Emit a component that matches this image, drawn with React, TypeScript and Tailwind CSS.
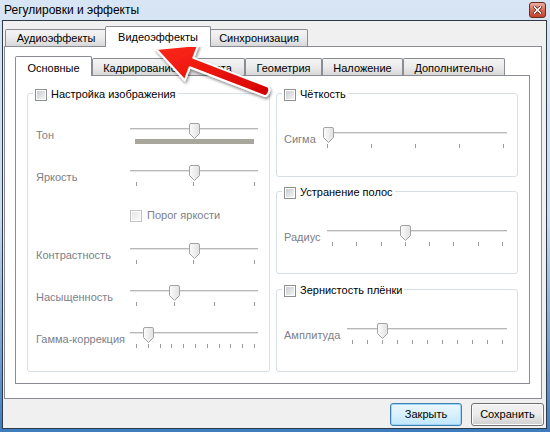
import React from 'react';

const range = (a: number, b: number, n: number) =>
  Array.from({ length: n }, (_, i) => Math.round(a + (i * (b - a)) / (n - 1)));

const Thumb: React.FC<{ left: number }> = ({ left }) => (
  <svg className="absolute top-0" style={{ left }} width="11" height="16" viewBox="0 0 11 16">
    <defs>
      <linearGradient id="thumbFill" x1="0" y1="0" x2="1" y2="0">
        <stop offset="0" stopColor="#fcfcfc" />
        <stop offset="1" stopColor="#e1e1e1" />
      </linearGradient>
    </defs>
    <path
      d="M0.5 2 Q0.5 0.5 2 0.5 H9 Q10.5 0.5 10.5 2 V10.5 L5.5 15.5 L0.5 10.5 Z"
      fill="url(#thumbFill)"
      stroke="#a3a3a3"
    />
  </svg>
);

const Slider: React.FC<{ width: string; thumb: number; ticks?: number[]; bar?: boolean }> = ({
  width,
  thumb,
  ticks = [],
  bar,
}) => (
  <div className={`relative h-[22px] shrink-0 ${width}`}>
    <div className="absolute left-0 right-0 top-[5px] h-px bg-[#b8b8b8]" />
    <div className="absolute left-0 right-0 top-[6px] h-px bg-[#e4e4e4]" />
    {bar && <div className="absolute left-[5px] right-[4px] top-[16px] h-[5px] bg-[#a8a69b]" />}
    {ticks.map((x) => (
      <div key={x} className="absolute top-[17px] h-[4px] w-px bg-[#9c9c9c]" style={{ left: x }} />
    ))}
    <Thumb left={thumb} />
  </div>
);

const CheckBox: React.FC<{ disabled?: boolean }> = ({ disabled }) => (
  <div
    className={`w-[12px] h-[12px] shrink-0 border p-px ${
      disabled ? 'border-[#c2c2c2] bg-white' : 'border-[#8e8f8f] bg-white'
    }`}
  >
    <div
      className={`w-full h-full bg-gradient-to-br ${
        disabled ? 'from-[#e6e6e6] to-[#fafafa]' : 'from-[#c9cdd2] to-[#f4f4f4]'
      }`}
    />
  </div>
);

const GroupBox: React.FC<{ title: string; className: string; children?: React.ReactNode }> = ({
  title,
  className,
  children,
}) => (
  <div className={`relative border border-[#d5dfe5] rounded-[3px] ${className}`}>
    <div className="absolute -top-[6px] left-[5px] h-[13px] flex items-center gap-[4px] bg-white px-[2px]">
      <CheckBox />
      <span className="text-[11px] leading-[13px] text-black whitespace-nowrap">{title}</span>
    </div>
    {children}
  </div>
);

const Label: React.FC<{ width: string; children: React.ReactNode }> = ({ width, children }) => (
  <div className={`${width} shrink-0 pt-[6px] text-[11px] leading-[13px] text-[#7d8088] whitespace-nowrap`}>
    {children}
  </div>
);

const Tab: React.FC<{ width: string; selected?: boolean; className?: string; children: React.ReactNode }> = ({
  width,
  selected,
  className = '',
  children,
}) =>
  selected ? (
    <div
      className={`relative z-10 -mb-px h-[21px] ${width} ${className} bg-white border border-b-0 border-[#898c95] rounded-t-[2px] flex justify-center pt-[3px] text-[11px] leading-[14px] text-black`}
    >
      {children}
    </div>
  ) : (
    <div
      className={`h-[17px] ${width} ${className} bg-gradient-to-b from-[#f4f4f4] via-[#ebebeb] to-[#d8d8d8] border border-b-0 border-[#898c95] rounded-t-[2px] flex justify-center pt-[1px] text-[11px] leading-[14px] text-black`}
    >
      {children}
    </div>
  );

const InnerTab: React.FC<{ width: string; selected?: boolean; children: React.ReactNode }> = ({
  width,
  selected,
  children,
}) =>
  selected ? (
    <div
      className={`relative z-10 -mb-px h-[20px] ${width} bg-white border border-b-0 border-[#898c95] rounded-t-[2px] flex justify-center pt-[4px] text-[11px] leading-[14px] text-black`}
    >
      {children}
    </div>
  ) : (
    <div
      className={`h-[17px] ${width} bg-gradient-to-b from-[#f4f4f4] via-[#ebebeb] to-[#d8d8d8] border border-b-0 border-[#898c95] rounded-t-[2px] flex justify-center pt-[2px] text-[11px] leading-[14px] text-black`}
    >
      {children}
    </div>
  );

const Button: React.FC<{ width: string; focused?: boolean; children: React.ReactNode }> = ({
  width,
  focused,
  children,
}) => (
  <div
    className={`${width} h-[23px] rounded-[3px] border flex items-center justify-center text-[11px] text-black ${
      focused
        ? 'border-[#3c7fb1] bg-gradient-to-b from-[#eaf6fd] via-[#d9f0fc] to-[#bee6fd] shadow-[inset_0_0_0_1px_#9fd5f6]'
        : 'border-[#707070] bg-gradient-to-b from-[#f2f2f2] via-[#ebebeb] to-[#cfcfcf] shadow-[inset_0_0_0_1px_#fcfcfc]'
    }`}
  >
    {children}
  </div>
);

const CloseButton: React.FC = () => (
  <div className="ml-auto w-[17px] h-[16px] rounded-[3px] border border-[#6b2a20] bg-gradient-to-b from-[#eab0a3] via-[#d76a55] to-[#c2432c] flex items-center justify-center">
    <svg width="9" height="8" viewBox="0 0 9 8">
      <path d="M1.5 1 L7.5 7 M7.5 1 L1.5 7" stroke="#4a1a12" strokeWidth="3" strokeLinecap="square" />
      <path d="M1.5 1 L7.5 7 M7.5 1 L1.5 7" stroke="#ffffff" strokeWidth="1.6" strokeLinecap="square" />
    </svg>
  </div>
);

const Arrow: React.FC = () => (
  <svg className="absolute inset-0 pointer-events-none" width="550" height="432" viewBox="0 0 550 432">
    <defs>
      <linearGradient id="arrowFill" x1="0" y1="0" x2="1" y2="1">
        <stop offset="0" stopColor="#ff2a1a" />
        <stop offset="1" stopColor="#d40000" />
      </linearGradient>
      <filter id="arrowShadow" x="-20%" y="-20%" width="140%" height="140%">
        <feDropShadow dx="1" dy="2" stdDeviation="1.5" floodColor="#000" floodOpacity="0.45" />
      </filter>
    </defs>
    <path
      d="M156 49 L198.3 44.9 L193.3 57.9 L268 86.5 Q271.5 91 266 95.9 L264.4 95.9 L189.7 67.3 L184.7 80.3 Z"
      fill="url(#arrowFill)"
      stroke="#ffffff"
      strokeWidth="2"
      strokeLinejoin="round"
      filter="url(#arrowShadow)"
    />
  </svg>
);

export default function App() {
  return (
    <div className="relative w-[550px] h-[432px] overflow-hidden bg-gradient-to-b from-[#d7e5f4] via-[#c9dbef] to-[#3d7cc0] font-['Liberation_Sans',Arial,sans-serif] select-none">
      {/* title bar */}
      <div className="h-[20px] flex items-center pl-[4px] pr-[4px]">
        <span className="text-[12px] leading-[14px] text-black">Регулировки и эффекты</span>
        <CloseButton />
      </div>

      {/* client area */}
      <div className="ml-[2px] mr-[3px] h-[409px] border border-[#2e3a48] bg-[#f0f0f0] flex flex-col">
        <div className="h-[25px] flex items-end pl-[2px]">
          <Tab width="w-[102px]">Аудиоэффекты</Tab>
          <Tab width="w-[106px]" selected className="-ml-[2px]">
            Видеоэффекты
          </Tab>
          <Tab width="w-[98px]" className="-ml-[1px]">
            Синхронизация
          </Tab>
        </div>

        <div className="ml-[1px] w-[538px] h-[353px] bg-white border border-[#898c95] flex flex-col">
          <div className="h-[28px] flex items-end pl-[10px]">
            <InnerTab width="w-[77px]" selected>
              Основные
            </InnerTab>
            <InnerTab width="w-[96px]">Кадрирование</InnerTab>
            <InnerTab width="w-[57px]">Цвета</InnerTab>
            <InnerTab width="w-[77px]">Геометрия</InnerTab>
            <InnerTab width="w-[81px]">Наложение</InnerTab>
            <InnerTab width="w-[102px]">Дополнительно</InnerTab>
          </div>

          <div className="ml-[10px] w-[515px] h-[309px] bg-white border border-[#898c95] flex pl-[11px] pt-[17px]">
            {/* left group */}
            <GroupBox title="Настройка изображения" className="w-[243px] h-[279px] flex flex-col pl-[8px]">
              <div className="mt-[29px] flex">
                <Label width="w-[94px]">Тон</Label>
                <Slider width="w-[128px]" thumb={59} bar />
              </div>
              <div className="mt-[20px] flex">
                <Label width="w-[94px]">Яркость</Label>
                <Slider width="w-[128px]" thumb={59} ticks={[6, 63, 124]} />
              </div>
              <div className="mt-[22px] ml-[94px] flex items-center gap-[5px]">
                <CheckBox disabled />
                <span className="text-[11px] leading-[13px] text-[#7d8088]">Порог яркости</span>
              </div>
              <div className="mt-[21px] flex">
                <Label width="w-[94px]">Контрастность</Label>
                <Slider width="w-[128px]" thumb={59} ticks={[6, 63, 124]} />
              </div>
              <div className="mt-[20px] flex">
                <Label width="w-[94px]">Насыщенность</Label>
                <Slider width="w-[128px]" thumb={39} ticks={[6, 44, 84, 124]} />
              </div>
              <div className="mt-[20px] flex">
                <Label width="w-[94px]">Гамма-коррекция</Label>
                <Slider width="w-[128px]" thumb={13} ticks={range(6, 124, 11)} />
              </div>
            </GroupBox>

            {/* right column */}
            <div className="ml-[6px] w-[242px] flex flex-col">
              <GroupBox title="Чёткость" className="h-[84px] pl-[7px]">
                <div className="mt-[33px] flex">
                  <Label width="w-[39px]">Сигма</Label>
                  <Slider width="w-[184px]" thumb={0} ticks={range(4, 180, 5)} />
                </div>
              </GroupBox>
              <GroupBox title="Устранение полос" className="mt-[14px] h-[83px] pl-[7px]">
                <div className="mt-[33px] flex">
                  <Label width="w-[43px]">Радиус</Label>
                  <Slider width="w-[180px]" thumb={73} ticks={range(5, 175, 8)} />
                </div>
              </GroupBox>
              <GroupBox title="Зернистость плёнки" className="mt-[15px] h-[83px] pl-[7px]">
                <div className="mt-[33px] flex">
                  <Label width="w-[63px]">Амплитуда</Label>
                  <Slider width="w-[160px]" thumb={30} ticks={range(5, 155, 11)} />
                </div>
              </GroupBox>
            </div>
          </div>
        </div>

        <div className="mt-[4px] flex justify-end gap-[9px] pr-[2px]">
          <Button width="w-[72px]" focused>
            Закрыть
          </Button>
          <Button width="w-[73px]">Сохранить</Button>
        </div>
      </div>

      <Arrow />
    </div>
  );
}
